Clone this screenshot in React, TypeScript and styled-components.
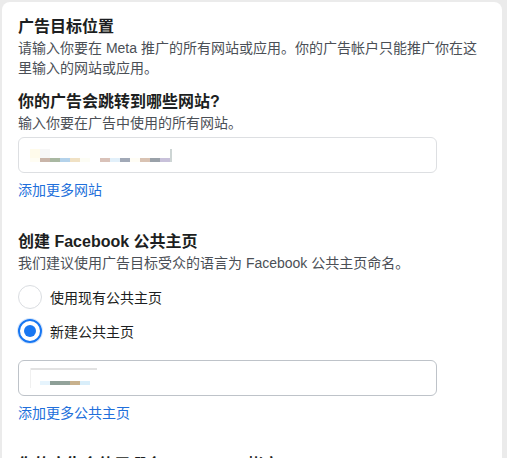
import React, { useState } from 'react';
import styled, { createGlobalStyle } from 'styled-components';

const GlobalStyle = createGlobalStyle`
  html, body {
    margin: 0;
    padding: 0;
    background: #ebebeb;
    overflow: hidden;
  }
  body {
    font-family: "Liberation Sans", "Noto Sans CJK SC", sans-serif;
  }
`;

const Page = styled.div`
  padding: 2px 5px 0 2px;
  height: 458px;
  box-sizing: border-box;
`;

const Card = styled.div`
  background: #ffffff;
  border-radius: 8px 8px 0 0;
  padding: 15px 16px 40px 16px;
  min-height: 600px;
  box-sizing: border-box;
`;

const Section = styled.section<{ $gap: number }>`
  margin-top: ${p => p.$gap}px;
  &:first-child {
    margin-top: 0;
  }
`;

const Title = styled.h2`
  margin: 0 0 1px 0;
  font-size: 16px;
  line-height: 20px;
  font-weight: bold;
  color: #1c1e21;
`;

const Hint = styled.p`
  margin: 0;
  font-size: 14px;
  line-height: 20px;
  color: #4b4f56;
`;

const Field = styled.div<{ $dark?: boolean; $gap: number }>`
  margin-top: ${p => p.$gap}px;
  height: 36px;
  width: 419px;
  box-sizing: border-box;
  border: 1px solid ${p => (p.$dark ? '#bec3c9' : '#dddfe2')};
  border-radius: 6px;
  background: #fff;
  display: flex;
  align-items: center;
  padding-left: 11px;
  position: relative;
`;

const Redacted = styled.div`
  display: grid;
  grid-auto-flow: column;
  grid-auto-columns: 10px;
  grid-template-rows: 9px 4px;
`;

const Px = styled.span<{ $c: string }>`
  background: ${p => p.$c};
`;

const Link = styled.a`
  display: block;
  margin-top: 7px;
  font-size: 14px;
  line-height: 20px;
  color: #216fdb;
  text-decoration: none;
  cursor: pointer;
`;

const Options = styled.div`
  margin-top: 12px;
  display: flex;
  flex-direction: column;
  gap: 10px;
`;

const Option = styled.label`
  display: flex;
  align-items: center;
  gap: 8px;
  height: 24px;
  font-size: 14px;
  color: #1c1e21;
  cursor: pointer;
`;

const Radio = styled.span<{ $on: boolean }>`
  width: 24px;
  height: 24px;
  box-sizing: border-box;
  border-radius: 50%;
  border: ${p => (p.$on ? '2px solid #1877f2' : '1px solid #dadde1')};
  box-shadow: ${p => (p.$on ? '0 0 0 1px #d6e6fb' : 'none')};
  display: flex;
  align-items: center;
  justify-content: center;
  &::after {
    content: '';
    width: 12px;
    height: 12px;
    border-radius: 50%;
    background: ${p => (p.$on ? '#1877f2' : 'transparent')};
  }
`;

const TopLine = styled.span`
  position: absolute;
  left: 11px;
  top: 7px;
  width: 67px;
  height: 2px;
  background: #e2e2e2;
`;

const SideLine = styled.span`
  position: absolute;
  left: 11px;
  top: 7px;
  width: 1px;
  height: 20px;
  background: #f0f0f0;
`;

const urlTop = ['#fffbeb', '#f7f7f7', 'transparent', 'transparent', 'transparent', 'transparent', 'transparent', 'transparent', 'transparent', 'transparent', 'transparent', 'transparent', 'transparent', 'transparent'];
const urlBottom = ['#fffdf3', '#c9b5a9', '#a9b8a2', '#b4d2ea', '#f0e1c4', '#fdfdf5', '#ffffff', '#d9c2b9', '#e2f0fa', '#a1a9b7', '#fffdf5', '#d9c3b3', '#9aa1a9', '#c8c1da'];
const pageTop = ['transparent', 'transparent', 'transparent', 'transparent', 'transparent', 'transparent'];
const pageBottom = ['transparent', '#e6f4fd', '#8d9f97', '#93a39b', '#c8b18d', '#d9eefa'];

const Blocks = ({ top, bottom, bar }: { top: string[]; bottom: string[]; bar?: boolean }) => (
  <Redacted>
    {top.map((c, i) => (
      <React.Fragment key={i}>
        <Px $c={c} />
        <Px $c={bottom[i]} />
      </React.Fragment>
    ))}
    {bar && (
      <>
        <Px $c="#cdd5d4" style={{ width: 2 }} />
        <Px $c="#cdd5d4" style={{ width: 2 }} />
      </>
    )}
  </Redacted>
);

export default function App() {
  const [choice, setChoice] = useState<'existing' | 'new'>('new');

  return (
    <>
      <GlobalStyle />
      <Page>
        <Card>
          <Section $gap={0}>
            <Title>广告目标位置</Title>
            <Hint>请输入你要在 Meta 推广的所有网站或应用。你的广告帐户只能推广你在这里输入的网站或应用。</Hint>
          </Section>

          <Section $gap={14}>
            <Title>你的广告会跳转到哪些网站?</Title>
            <Hint>输入你要在广告中使用的所有网站。</Hint>
            <Field $gap={4}>
              <Blocks top={urlTop} bottom={urlBottom} bar />
            </Field>
            <Link>添加更多网站</Link>
          </Section>

          <Section $gap={32}>
            <Title>创建 Facebook 公共主页</Title>
            <Hint>我们建议使用广告目标受众的语言为 Facebook 公共主页命名。</Hint>
            <Options>
              <Option onClick={() => setChoice('existing')}>
                <Radio $on={choice === 'existing'} />
                使用现有公共主页
              </Option>
              <Option onClick={() => setChoice('new')}>
                <Radio $on={choice === 'new'} />
                新建公共主页
              </Option>
            </Options>
            <Field $dark $gap={17}>
              <TopLine />
              <SideLine />
              <Blocks top={pageTop} bottom={pageBottom} />
            </Field>
            <Link>添加更多公共主页</Link>
          </Section>

          <Section $gap={32}>
            <Title>你的广告会使用哪个 Instagram 帐户?</Title>
            <Hint>选择要在广告中代表你的商家的 Instagram 帐户。</Hint>
          </Section>
        </Card>
      </Page>
    </>
  );
}
